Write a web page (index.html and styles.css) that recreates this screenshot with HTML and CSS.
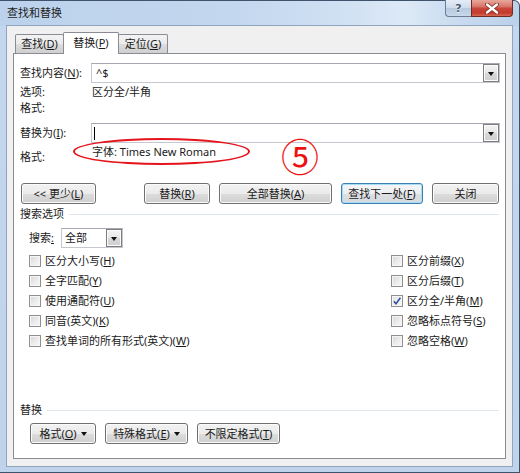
FILE: index.html
```html
<!DOCTYPE html>
<html lang="zh-CN">
<head>
<meta charset="utf-8">
<title>查找和替换</title>
<link rel="stylesheet" href="styles.css">
</head>
<body>
<div class="window">
  <div class="titlebar">
    <span class="title">查找和替换</span>
    <div class="caption">
      <div class="cbtn help">?</div>
      <div class="cbtn close">
        <svg width="16" height="11" viewBox="0 0 16 11"><path d="M3 1.5 L13 9.5 M13 1.5 L3 9.5" stroke="#7a2a24" stroke-width="4" stroke-linecap="round"/><path d="M3 1.5 L13 9.5 M13 1.5 L3 9.5" stroke="#ffffff" stroke-width="2.4" stroke-linecap="round"/></svg>
      </div>
    </div>
  </div>
  <div class="client">
    <div class="tabs">
      <div class="tab t1">查找(<u>D</u>)</div>
      <div class="tab active">替换(<u>P</u>)</div>
      <div class="tab t3">定位(<u>G</u>)</div>
    </div>
    <div class="panel">
      <div class="field-row">
        <span class="lbl">查找内容(<u>N</u>):</span>
        <div class="combo"><span class="combo-text">^$</span><span class="drop"></span></div>
      </div>
      <div class="info-row first"><span class="lbl">选项:</span><span class="val">区分全/半角</span></div>
      <div class="info-row"><span class="lbl">格式:</span></div>
      <div class="field-row replace">
        <span class="lbl">替换为(<u>I</u>):</span>
        <div class="combo"><span class="caret"></span><span class="drop"></span></div>
      </div>
      <div class="fmt-row">
        <span class="lbl fmt-lbl">格式:</span>
        <span class="val">字体: Times New Roman</span>
        <span class="ellipse"></span>
        <span class="marker">⑤</span>
      </div>
      <div class="btn-row">
        <div class="btn b-less">&lt;&lt; 更少(<u>L</u>)</div>
        <div class="btn b-rep">替换(<u>R</u>)</div>
        <div class="btn b-all">全部替换(<u>A</u>)</div>
        <div class="btn b-next default">查找下一处(<u>F</u>)</div>
        <div class="btn b-close">关闭</div>
      </div>
      <div class="group-title">搜索选项</div>
      <div class="search-row">
        <span class="s-lbl">搜索<u>:</u></span>
        <div class="select"><span class="select-text">全部</span><span class="drop"></span></div>
      </div>
      <div class="checks">
        <div class="check"><span class="cb"></span><span>区分大小写(<u>H</u>)</span></div>
        <div class="check"><span class="cb"></span><span>全字匹配(<u>Y</u>)</span></div>
        <div class="check"><span class="cb"></span><span>使用通配符(<u>U</u>)</span></div>
        <div class="check"><span class="cb"></span><span>同音(英文)(<u>K</u>)</span></div>
        <div class="check"><span class="cb"></span><span>查找单词的所有形式(英文)(<u>W</u>)</span></div>
        <div class="check"><span class="cb"></span><span>区分前缀(<u>X</u>)</span></div>
        <div class="check"><span class="cb"></span><span>区分后缀(<u>T</u>)</span></div>
        <div class="check"><span class="cb checked"><svg width="10" height="10" viewBox="0 0 10 10"><path d="M1.8 5.2 L4 7.8 L8.4 1.8" fill="none" stroke="#2f4f9a" stroke-width="1.5"/></svg></span><span>区分全/半角(<u>M</u>)</span></div>
        <div class="check"><span class="cb"></span><span>忽略标点符号(<u>S</u>)</span></div>
        <div class="check"><span class="cb"></span><span>忽略空格(<u>W</u>)</span></div>
      </div>
      <div class="bottom-group">
        <div class="group-title">替换</div>
        <div class="btn-row bottom">
          <div class="btn b-fmt">格式(<u>O</u>) <span class="arr"></span></div>
          <div class="btn b-spec">特殊格式(<u>E</u>) <span class="arr"></span></div>
          <div class="btn b-nofmt">不限定格式(<u>T</u>)</div>
        </div>
      </div>
    </div>
  </div>
</div>
</body>
</html>
```

FILE: styles.css
```css
html, body {
  margin: 0;
  padding: 0;
  background: #ffffff;
}

body {
  font-family: "Noto Sans", "Noto Sans CJK SC", sans-serif;
  font-size: 11px;
  color: #1b1b1b;
}

u {
  text-decoration-thickness: 1px;
  text-underline-offset: 1px;
}

.window {
  width: 520px;
  height: 473px;
  box-sizing: border-box;
  border: 1px solid #3f536c;
  border-left: none;
  border-radius: 0 6px 0 0;
  padding: 0 6px 5px 6px;
  display: flex;
  flex-direction: column;
  background:
    linear-gradient(to right, #bcd2ec 0%, #c3d7ee 45%, #cfe0f3 65%, #dde9f6 78%, #c6d9ef 90%, #bcd1ea 100%) top / 100% 25px no-repeat,
    linear-gradient(to bottom, #c4d7ee, #bfd3eb);
}

.titlebar {
  height: 24px;
  display: flex;
  align-items: flex-start;
  flex: none;
}

.title {
  padding: 5px 0 0 1px;
  line-height: 14px;
  color: #1e1e1e;
}

.caption {
  margin-left: auto;
  margin-top: -1px;
  display: flex;
}

.cbtn {
  height: 17px;
  box-sizing: border-box;
  display: flex;
  align-items: center;
  justify-content: center;
}

.help {
  width: 26px;
  border: 1px solid #6c7c92;
  border-top: none;
  border-right: none;
  border-radius: 0 0 0 4px;
  background: linear-gradient(to bottom, #e4ecf6 0%, #cfdcec 50%, #b7c9df 51%, #c9d8ea 100%);
  color: #4d5c72;
  font-family: "DejaVu Sans", sans-serif;
  font-size: 11px;
  font-weight: bold;
  text-shadow: 0 1px 0 #f4f8fc;
}

.close {
  width: 42px;
  border: 1px solid #6e2b27;
  border-top: none;
  border-radius: 0 0 4px 0;
  background: linear-gradient(to bottom, #e9a79c 0%, #d9786b 40%, #c8463a 52%, #c5392e 80%, #d66a52 100%);
}

.client {
  flex: 1;
  background: #f0f0f0;
  border: 1px solid #8fa4be;
  padding: 6px 6px 7px 6px;
  display: flex;
  flex-direction: column;
}

.tabs {
  display: flex;
  height: 21px;
  flex: none;
  padding-left: 2px;
}

.tab {
  box-sizing: border-box;
  height: 19px;
  margin-top: 2px;
  border: 1px solid #898c95;
  border-bottom: none;
  border-radius: 2px 2px 0 0;
  background: linear-gradient(to bottom, #f3f3f3 0%, #ebebeb 50%, #dddddd 51%, #cfcfcf 100%);
  display: flex;
  align-items: center;
  justify-content: center;
  line-height: 14px;
}

.t1 { width: 49px; }
.t3 { width: 50px; }

.tab.active {
  width: 56px;
  height: 22px;
  margin-top: 0;
  margin-left: -1px;
  margin-right: -1px;
  background: #ffffff;
  position: relative;
  z-index: 2;
  padding-bottom: 2px;
}

.panel {
  flex: 1;
  background: #ffffff;
  border: 1px solid #898c95;
  padding: 9px 5px 14px 6px;
  display: flex;
  flex-direction: column;
}

.field-row {
  display: flex;
  align-items: center;
  height: 20px;
  flex: none;
}

.replace {
  margin-top: 7px;
}

.lbl {
  width: 71px;
  flex: none;
  line-height: 16px;
}

.combo {
  flex: 1;
  height: 20px;
  box-sizing: border-box;
  border: 1px solid #c5c8ce;
  border-top-color: #a5a8ae;
  display: flex;
  align-items: center;
  background: #ffffff;
}

.combo-text {
  padding-left: 4px;
  line-height: 16px;
}

.caret {
  width: 1px;
  height: 13px;
  margin-left: 2px;
  background: #000000;
}

.drop {
  margin-left: auto;
  width: 16px;
  height: 18px;
  box-sizing: border-box;
  border: 1px solid #7d7d7d;
  background: linear-gradient(to bottom, #f4f4f4 0%, #e6e6e6 50%, #d8d8d8 51%, #d0d0d0 100%);
  box-shadow: inset 0 0 0 1px #fbfbfb;
  display: flex;
  align-items: center;
  justify-content: center;
}

.drop::after {
  content: "";
  width: 0;
  height: 0;
  border-left: 3px solid transparent;
  border-right: 3px solid transparent;
  border-top: 4px solid #111111;
  margin-top: 1px;
}

.info-row {
  display: flex;
  height: 16px;
  line-height: 16px;
  flex: none;
}

.info-row.first {
  margin-top: 1px;
}

.val {
  padding-left: 1px;
  line-height: 16px;
}

.fmt-row {
  position: relative;
  display: flex;
  height: 21px;
  margin-top: 1px;
  flex: none;
}

.fmt-lbl {
  padding-top: 5px;
}

.ellipse {
  position: absolute;
  left: 53px;
  top: -6px;
  width: 177px;
  height: 27px;
  box-sizing: border-box;
  border: 2px solid #e5141c;
  border-radius: 50%;
}

.marker {
  position: absolute;
  left: 261px;
  top: -11px;
  font-family: "Noto Sans CJK SC", sans-serif;
  font-size: 38px;
  line-height: 44px;
  color: #ee1111;
}

.btn-row {
  display: flex;
  gap: 9px;
  margin-top: 18px;
  padding: 0 1px 0 1px;
  flex: none;
}

.btn {
  height: 21px;
  box-sizing: border-box;
  border: 1px solid #707070;
  border-radius: 3px;
  background: linear-gradient(to bottom, #f2f2f2 0%, #ebebeb 50%, #dddddd 51%, #cfcfcf 100%);
  box-shadow: inset 0 0 0 1px #fbfbfb;
  display: flex;
  align-items: center;
  justify-content: center;
  line-height: 14px;
  white-space: nowrap;
}

.btn.default {
  border-color: #3c7fb1;
  box-shadow: inset 0 0 0 1px #a6def8;
  background: linear-gradient(to bottom, #f3f5f7 0%, #eceef0 50%, #dee1e4 51%, #d5d8dc 100%);
}

.b-less { width: 75px; margin-right: auto; }
.b-rep { width: 66px; }
.b-all { width: 113px; }
.b-next { width: 82px; }
.b-close { width: 67px; }

.group-title {
  display: flex;
  align-items: center;
  height: 16px;
  line-height: 16px;
  margin-top: 2px;
  padding-right: 1px;
  flex: none;
}

.group-title::after {
  content: "";
  flex: 1;
  height: 1px;
  margin-left: 5px;
  background: #dfe5ec;
}

.search-row {
  display: flex;
  align-items: center;
  height: 20px;
  margin-top: 6px;
  padding-left: 9px;
  flex: none;
}

.s-lbl {
  width: 32px;
  line-height: 16px;
}

.select {
  width: 62px;
  height: 20px;
  box-sizing: border-box;
  border: 1px solid #c5c8ce;
  border-top-color: #a5a8ae;
  display: flex;
  align-items: center;
}

.select-text {
  padding-left: 3px;
  line-height: 16px;
}

.checks {
  display: grid;
  grid-template-columns: 362px auto;
  grid-template-rows: repeat(5, 20px);
  grid-auto-flow: column;
  margin-top: 3px;
  padding-left: 9px;
  flex: none;
}

.check {
  display: flex;
  align-items: center;
  gap: 4px;
  line-height: 16px;
}

.cb {
  width: 12px;
  height: 12px;
  box-sizing: border-box;
  border: 1px solid #8f8f8f;
  background: linear-gradient(135deg, #d6d6d6 0%, #eeeeee 60%, #fafafa 100%);
  box-shadow: inset 0 0 0 1px #f6f6f6;
  display: flex;
  align-items: center;
  justify-content: center;
  flex: none;
}

.cb.checked {
  background: linear-gradient(135deg, #e4e4e4 0%, #f6f6f6 100%);
}

.bottom-group {
  margin-top: auto;
  display: flex;
  flex-direction: column;
}

.btn-row.bottom {
  margin-top: 5px;
  padding-left: 10px;
  gap: 9px;
}

.b-fmt { width: 66px; }
.b-spec { width: 83px; }
.b-nofmt { width: 83px; }

.arr {
  display: inline-block;
  width: 0;
  height: 0;
  margin-left: 4px;
  border-left: 3.5px solid transparent;
  border-right: 3.5px solid transparent;
  border-top: 4px solid #111111;
}
```
